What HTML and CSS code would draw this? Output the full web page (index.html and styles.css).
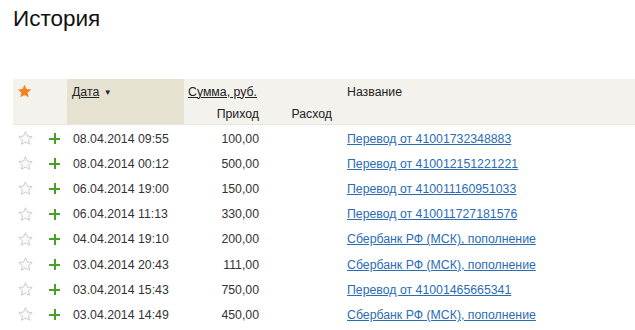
FILE: index.html
```html
<!DOCTYPE html>
<html lang="ru">
<head>
<meta charset="utf-8">
<link rel="stylesheet" href="styles.css">
</head>
<body>
<h1 class="title">История</h1>
<table class="history">
  <colgroup>
    <col class="c-star"><col class="c-plus"><col class="c-date"><col class="c-in"><col class="c-out"><col class="c-name">
  </colgroup>
  <thead>
    <tr class="h1">
      <th class="star-cell"><svg class="star" viewBox="0 0 16 16" width="15" height="15"><path d="M8 0.8l2.1 4.6 5 .5-3.8 3.4 1.1 4.9L8 11.7l-4.4 2.5 1.1-4.9L0.9 5.9l5-.5z" fill="#f5821f"/></svg></th>
      <th></th>
      <th class="date-h"><a class="sort">Дата</a> <span class="arrow">▼</span></th>
      <th class="sum-h" colspan="2"><a class="sort">Сумма, руб.</a></th>
      <th class="name-h">Название</th>
    </tr>
    <tr class="h2">
      <th></th>
      <th></th>
      <th class="date-h"></th>
      <th class="num">Приход</th>
      <th class="num">Расход</th>
      <th></th>
    </tr>
  </thead>
  <tbody>
    <tr><td class="star-cell"><svg class="star" viewBox="0 0 16 16" width="15" height="15"><path d="M8 0.8l2.1 4.6 5 .5-3.8 3.4 1.1 4.9L8 11.7l-4.4 2.5 1.1-4.9L0.9 5.9l5-.5z" fill="#fafafa" stroke="#c9c9c9" stroke-width="1"/></svg></td><td class="plus-cell"><span class="plus"></span></td><td class="date">08.04.2014 09:55</td><td class="num">100,00</td><td class="num"></td><td class="name"><a href="#">Перевод от 41001732348883</a></td></tr>
    <tr><td class="star-cell"><svg class="star" viewBox="0 0 16 16" width="15" height="15"><path d="M8 0.8l2.1 4.6 5 .5-3.8 3.4 1.1 4.9L8 11.7l-4.4 2.5 1.1-4.9L0.9 5.9l5-.5z" fill="#fafafa" stroke="#c9c9c9" stroke-width="1"/></svg></td><td class="plus-cell"><span class="plus"></span></td><td class="date">08.04.2014 00:12</td><td class="num">500,00</td><td class="num"></td><td class="name"><a href="#">Перевод от 410012151221221</a></td></tr>
    <tr><td class="star-cell"><svg class="star" viewBox="0 0 16 16" width="15" height="15"><path d="M8 0.8l2.1 4.6 5 .5-3.8 3.4 1.1 4.9L8 11.7l-4.4 2.5 1.1-4.9L0.9 5.9l5-.5z" fill="#fafafa" stroke="#c9c9c9" stroke-width="1"/></svg></td><td class="plus-cell"><span class="plus"></span></td><td class="date">06.04.2014 19:00</td><td class="num">150,00</td><td class="num"></td><td class="name"><a href="#">Перевод от 410011160951033</a></td></tr>
    <tr><td class="star-cell"><svg class="star" viewBox="0 0 16 16" width="15" height="15"><path d="M8 0.8l2.1 4.6 5 .5-3.8 3.4 1.1 4.9L8 11.7l-4.4 2.5 1.1-4.9L0.9 5.9l5-.5z" fill="#fafafa" stroke="#c9c9c9" stroke-width="1"/></svg></td><td class="plus-cell"><span class="plus"></span></td><td class="date">06.04.2014 11:13</td><td class="num">330,00</td><td class="num"></td><td class="name"><a href="#">Перевод от 410011727181576</a></td></tr>
    <tr><td class="star-cell"><svg class="star" viewBox="0 0 16 16" width="15" height="15"><path d="M8 0.8l2.1 4.6 5 .5-3.8 3.4 1.1 4.9L8 11.7l-4.4 2.5 1.1-4.9L0.9 5.9l5-.5z" fill="#fafafa" stroke="#c9c9c9" stroke-width="1"/></svg></td><td class="plus-cell"><span class="plus"></span></td><td class="date">04.04.2014 19:10</td><td class="num">200,00</td><td class="num"></td><td class="name"><a href="#">Сбербанк РФ (МСК), пополнение</a></td></tr>
    <tr><td class="star-cell"><svg class="star" viewBox="0 0 16 16" width="15" height="15"><path d="M8 0.8l2.1 4.6 5 .5-3.8 3.4 1.1 4.9L8 11.7l-4.4 2.5 1.1-4.9L0.9 5.9l5-.5z" fill="#fafafa" stroke="#c9c9c9" stroke-width="1"/></svg></td><td class="plus-cell"><span class="plus"></span></td><td class="date">03.04.2014 20:43</td><td class="num">111,00</td><td class="num"></td><td class="name"><a href="#">Сбербанк РФ (МСК), пополнение</a></td></tr>
    <tr><td class="star-cell"><svg class="star" viewBox="0 0 16 16" width="15" height="15"><path d="M8 0.8l2.1 4.6 5 .5-3.8 3.4 1.1 4.9L8 11.7l-4.4 2.5 1.1-4.9L0.9 5.9l5-.5z" fill="#fafafa" stroke="#c9c9c9" stroke-width="1"/></svg></td><td class="plus-cell"><span class="plus"></span></td><td class="date">03.04.2014 15:43</td><td class="num">750,00</td><td class="num"></td><td class="name"><a href="#">Перевод от 41001465665341</a></td></tr>
    <tr><td class="star-cell"><svg class="star" viewBox="0 0 16 16" width="15" height="15"><path d="M8 0.8l2.1 4.6 5 .5-3.8 3.4 1.1 4.9L8 11.7l-4.4 2.5 1.1-4.9L0.9 5.9l5-.5z" fill="#fafafa" stroke="#c9c9c9" stroke-width="1"/></svg></td><td class="plus-cell"><span class="plus"></span></td><td class="date">03.04.2014 14:49</td><td class="num">450,00</td><td class="num"></td><td class="name"><a href="#">Сбербанк РФ (МСК), пополнение</a></td></tr>
  </tbody>
</table>
</body>
</html>
```
FILE: styles.css
```css
html, body {
  margin: 0;
  padding: 0;
  background: #fff;
  font-family: Arial, "Liberation Sans", sans-serif;
  color: #333;
}
body {
  padding-left: 13px;
  overflow: hidden;
}
.title {
  margin: 6px 0 0;
  font-size: 22.5px;
  font-weight: normal;
  line-height: 25px;
  color: #111;
}
.history {
  margin-top: 48px;
  width: 622px;
  border-collapse: collapse;
  table-layout: fixed;
  font-size: 12.3px;
}
.c-star { width: 27px; }
.c-plus { width: 27px; }
.c-date { width: 117px; }
.c-in { width: 80px; }
.c-out { width: 73px; }
.c-name { width: auto; }

thead th {
  background: #f3f2ed;
  font-weight: normal;
  text-align: left;
  padding: 0;
  color: #222;
}
thead tr.h1 th { height: 25px; vertical-align: middle; }
thead tr.h2 th { height: 20px; vertical-align: middle; border-bottom: 1px solid #e8e6dd; }
thead th.date-h { background: #e6e2d2; padding-left: 5px; }
thead th.sum-h { padding-left: 4px; }
thead th.name-h { padding-left: 10px; }
thead th.num { text-align: right; padding-right: 5px; }
.sort { color: #222; text-decoration: underline; }
.arrow { font-size: 8px; margin-left: 1px; position: relative; top: -1px; }

.star-cell { padding: 0 0 0 4px; line-height: 0; }
.star { display: block; }

tbody td {
  height: 25.2px;
  padding: 0;
  vertical-align: middle;
  white-space: nowrap;
}
tbody tr:first-child td { padding-top: 1px; }
tbody .star-cell { padding-left: 5px; }
.plus-cell { padding-left: 10px; }
.plus {
  display: block;
  position: relative;
  width: 11px;
  height: 11px;
  margin-left: -1px;
}
.plus::before, .plus::after {
  content: "";
  position: absolute;
  background: #46a02a;
}
.plus::before { left: 0; top: 4.5px; width: 11px; height: 2px; }
.plus::after { left: 4.5px; top: 0; width: 2px; height: 11px; }
td.date { padding-left: 6px; color: #333; }
td.num { text-align: right; padding-right: 5px; color: #333; }
td.name { padding-left: 10px; }
td.name a { color: #2b6cb5; text-decoration: underline; }
```
